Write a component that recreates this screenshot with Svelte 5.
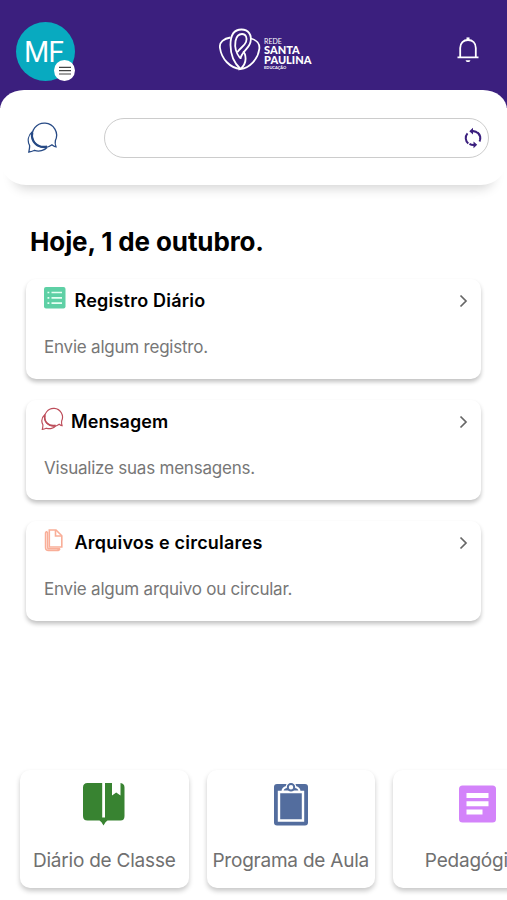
<script>
  let search = $state("");

  const cards = [
    { icon: "list", title: "Registro Diário", text: "Envie algum registro." },
    { icon: "chat", title: "Mensagem", text: "Visualize suas mensagens." },
    { icon: "files", title: "Arquivos e circulares", text: "Envie algum arquivo ou circular." }
  ];

  const shortcuts = [
    { icon: "book", label: "Diário de Classe" },
    { icon: "clipboard", label: "Programa de Aula" },
    { icon: "article", label: "Pedagógico" }
  ];
</script>

{#snippet chat()}
  <path d="M5.500 11.500C1 15.500 .2 21 2.600 25.500C2.800 28 2.200 30 1.800 32C4.500 31.800 6 31 7.500 30.300C12 32 17.500 30.500 20 27.500" />
  <path class="thick" d="M5.300 12.500C3.500 21 10 28.500 20 26.500" />
  <path d="M25 24.800A12.200 12.200 0 1 1 28.400 20.500C27.800 22.800 28.200 24.800 29 26.800C27.300 26.800 26.300 25.800 25 24.800Z" />
{/snippet}

<div class="app">
  <header>
    <button class="avatar" aria-label="Menu">
      <span class="initials">MF</span>
      <span class="menu">
        <svg width="21" height="21" viewBox="0 0 21 21"><path d="M5 7.400H17M5 10.700H17M5 14H17" stroke="#444" stroke-width="1.200" /></svg>
      </span>
    </button>
    <div class="logo">
      <svg width="42" height="44" viewBox="0 0 42 44" fill="none" stroke="#fff" stroke-width="1.800">
        <path d="M21.500 41C14 34 11.500 26 11.500 17C11.500 7 15 1.500 22.500 1.500C29.500 1.500 33 7 31.500 14C30 21 22 24 21.500 31" />
        <path d="M11.500 9.500C5 10.500 0 14 1 20C2.500 31 11 40 21.500 41" />
        <path d="M32 10.500C37.500 12 41 16 40.300 21C39 31 31 40 21.500 41C26 37 27.500 32 26 26.500L24.500 23" />
        <path d="M21 30C17 25 15.500 19 16.500 13C17.500 8 20 6 23 6C27 6 28.500 10 27 14C25.500 18 21 20 18.500 24" />
      </svg>
      <div class="brand">
        <span class="small">REDE</span>
        <strong>SANTA</strong>
        <strong>PAULINA</strong>
        <span class="tiny">EDUCAÇÃO</span>
      </div>
    </div>
    <svg class="bell" width="22" height="26" viewBox="0 0 22 26" fill="none" stroke="#fff" stroke-width="1.800">
      <path d="M.5 20.300H21.500M3.200 20V11C3.200 6 6.400 3 11 3S18.800 6 18.800 11V20" />
      <path d="M11 3V.4" stroke-width="3" />
      <path d="M8.500 23.300H13.500L12.300 25H9.700Z" fill="#fff" stroke="none" />
    </svg>
  </header>

  <section class="toolbar">
    <svg class="chat-icon" width="33" height="34" viewBox="0 0 33 34">{@render chat()}</svg>
    <div class="search">
      <input bind:value={search} aria-label="Buscar" />
      <svg width="22" height="22" viewBox="0 0 22 22" fill="none" stroke="#3b1f7e" stroke-width="2">
        <path d="M6.300 16.500A7.200 7.200 0 0 1 5.500 6.300M10 4.200A7.200 7.200 0 0 1 18 12.800M15.700 5.500A7.200 7.200 0 0 1 17.500 14.500M12.500 17.800A7.200 7.200 0 0 1 7.500 16.800" />
        <path d="M11 .8V7.600L7.300 4.200ZM11.500 14.400V21.200L15.200 17.800Z" fill="#3b1f7e" stroke="none" />
      </svg>
    </div>
  </section>

  <main>
    <h1>Hoje, 1 de outubro.</h1>
    <div class="cards">
      {#each cards as card}
        <article class="card">
          <div class="card-head {card.icon}">
            {#if card.icon === "list"}
              <svg width="22" height="22" viewBox="0 0 22 22">
                <rect width="21.500" height="21.500" rx="2" fill="#5ed0a5" />
                <path d="M3.500 5.500H5.300M7.500 5.500H18M3.500 10.800H5.300M7.500 10.800H18M3.500 16.100H5.300M7.500 16.100H18" stroke="#e6fff3" stroke-width="1.700" />
              </svg>
            {:else if card.icon === "chat"}
              <svg class="chat-icon red" width="24" height="25" viewBox="0 0 33 34">{@render chat()}</svg>
            {:else}
              <svg width="20" height="23" viewBox="0 0 20 23" fill="none" stroke="#f9ae98" stroke-width="1.600">
                <path d="M5.300 1H12L17.800 6.800V18H5.300Z" />
                <path d="M11.500 1V7H17.800" />
                <path d="M3.500 2.500Q1.500 2.500 1.500 4.500V18.500Q1.500 21.500 4.500 21.500H13Q15.500 21.500 16 19.500M3.500 3V18Q3.500 19.800 5.300 19.800H16" stroke-width="1.500" />
              </svg>
            {/if}
            <h2>{card.title}</h2>
            <svg class="arrow" width="9" height="14" viewBox="0 0 9 14" fill="none" stroke="#666" stroke-width="1.700"><path d="M1.500 1.500L7 7L1.500 12.500" /></svg>
          </div>
          <p>{card.text}</p>
        </article>
      {/each}
    </div>
  </main>

  <nav>
    {#each shortcuts as item}
      <button class="tile">
        <svg width="44" height="46" viewBox="0 0 44 46">
          {#if item.icon === "book"}
            <path d="M20.200 2H5.500Q1 2 1 6.500V35Q1 39.500 5.500 39.500H17.500Q19.500 40.500 21.500 44.500Q23.500 40.500 25.500 39.500H38.500Q42.500 39.500 42.500 35V6.500Q42.500 2.500 38.500 2V14.500L34.200 11.500L30 14.500V2H23V36.500H20.200Z" fill="#388331" />
          {:else if item.icon === "clipboard"}
            <rect x="5" y="3" width="34" height="41.500" rx="3" fill="#536d9e" />
            <path d="M10 11H34V39.500H10Z" fill="#536d9e" stroke="#fff" stroke-width="2.400" />
            <path d="M13.500 10.500Q13.500 7 17.500 6Q18.500 1.500 22 1.500T26.500 6Q30.500 7 30.500 10.500Z" fill="#536d9e" stroke="#fff" stroke-width="2" />
            <circle cx="22" cy="6.200" r="3.200" fill="#fff" stroke="#536d9e" stroke-width="2" />
          {:else}
            <rect x="4" y="4.500" width="37" height="37" rx="3.500" fill="#d383fa" />
            <path d="M11.500 14.400H33.500M11.500 22.700H33.500M11.500 31.100H27.500" stroke="#fff" stroke-width="5" />
          {/if}
        </svg>
        <span>{item.label}</span>
      </button>
    {/each}
  </nav>
</div>

<style>
  :global(body) {
    background: #fff;
  }

  .app {
    width: 507px;
    height: 900px;
    overflow: hidden;
    display: flex;
    flex-direction: column;
    background: #fff;
    font-family: Inter, "Liberation Sans", sans-serif;
  }

  button {
    border: none;
    padding: 0;
    font-family: inherit;
  }

  header {
    height: 108px;
    box-sizing: border-box;
    flex: none;
    background: #3b1f7e;
    padding: 21.5px 28px 0 15.5px;
    display: flex;
    justify-content: space-between;
    align-items: flex-start;
  }

  .avatar {
    position: relative;
    width: 59px;
    height: 59px;
    border-radius: 50%;
    background: #08aac0;
    color: #fff;
  }

  .initials {
    display: block;
    padding-top: 1px;
    margin-left: -2px;
    font-size: 28px;
    letter-spacing: -0.8px;
    line-height: 59px;
  }

  .menu {
    position: absolute;
    right: 0;
    bottom: 0;
    width: 21px;
    height: 21px;
    border-radius: 50%;
    background: #fff;
  }

  .menu svg {
    display: block;
  }

  .logo {
    display: flex;
    gap: 3px;
    margin: 6.5px 0 0 -1px;
  }

  .brand {
    display: flex;
    flex-direction: column;
    color: #fff;
    padding-top: 9px;
    font-family: Lato, "Open Sans", sans-serif;
  }

  .brand strong {
    font-size: 11px;
    line-height: 9.5px;
    font-weight: 900;
  }

  .brand .small {
    font-size: 7px;
    line-height: 8px;
  }

  .brand .tiny {
    font-size: 4px;
    line-height: 7px;
    font-weight: 700;
  }

  .bell {
    margin-top: 15px;
  }

  .toolbar {
    flex: none;
    height: 95px;
    margin-top: -18px;
    box-sizing: border-box;
    padding: 0 18px 0 27px;
    display: flex;
    align-items: center;
    justify-content: space-between;
    background: #fff;
    border-radius: 24px 24px 26px 26px / 20px 20px 26px 26px;
    box-shadow: 0 17px 12px -14px rgba(0, 0, 0, 0.18);
  }

  .chat-icon {
    fill: none;
    stroke: #274a85;
    stroke-width: 1.3;
  }

  .toolbar .chat-icon {
    margin-bottom: 2px;
  }

  .chat-icon :global(.thick) {
    stroke-width: 2.2;
  }

  .chat-icon.red {
    stroke: #bd4d5a;
    stroke-width: 1.6;
  }

  .search {
    width: 385px;
    height: 40px;
    box-sizing: border-box;
    border: 1.5px solid #ccc;
    border-radius: 20px;
    display: flex;
    align-items: center;
    padding: 0 4px 0 16px;
  }

  .search input {
    flex: 1;
    border: none;
    outline: none;
    background: none;
    font-size: 16px;
  }

  main {
    padding: 41px 26px 0;
  }

  h1 {
    margin: 0 0 21px 4px;
    font-size: 26px;
    line-height: 32px;
    font-weight: 700;
    letter-spacing: -0.12px;
    color: #000;
  }

  .cards {
    display: flex;
    flex-direction: column;
    gap: 21px;
  }

  .card {
    height: 100px;
    box-sizing: border-box;
    padding: 8px 13px 0 18px;
    border-radius: 10px;
    background: #fff;
    box-shadow: 0 3px 4px rgba(0, 0, 0, 0.24);
  }

  .card-head {
    display: flex;
    align-items: flex-start;
    height: 26px;
  }

  .card-head.chat {
    margin-left: -3px;
  }

  .chat .chat-icon {
    margin-top: -2px;
  }

  h2 {
    margin: 1px 0 0 8.5px;
    font-size: 18px;
    line-height: 26px;
    font-weight: 600;
    letter-spacing: 0.22px;
    color: #000;
  }

  .chat h2 {
    margin-left: 6px;
    letter-spacing: 0.1px;
  }

  .files h2 {
    margin-left: 10.5px;
  }

  .arrow {
    margin: 7px 0 0 auto;
  }

  .card p {
    margin: 24px 0 0;
    font-size: 17px;
    line-height: 21px;
    letter-spacing: -0.22px;
    color: #777;
  }

  nav {
    display: flex;
    gap: 18px;
    margin: auto 0 12px;
    padding-left: 20px;
  }

  .tile {
    flex: none;
    width: 168.5px;
    height: 118px;
    padding-top: 11px;
    display: flex;
    flex-direction: column;
    align-items: center;
    background: #fff;
    border-radius: 10px;
    box-shadow: 0 3px 5px rgba(0, 0, 0, 0.22);
  }

  .tile span {
    margin-top: 21px;
    font-size: 19px;
    line-height: 26px;
    letter-spacing: -0.22px;
    color: #707070;
    white-space: nowrap;
  }
</style>
